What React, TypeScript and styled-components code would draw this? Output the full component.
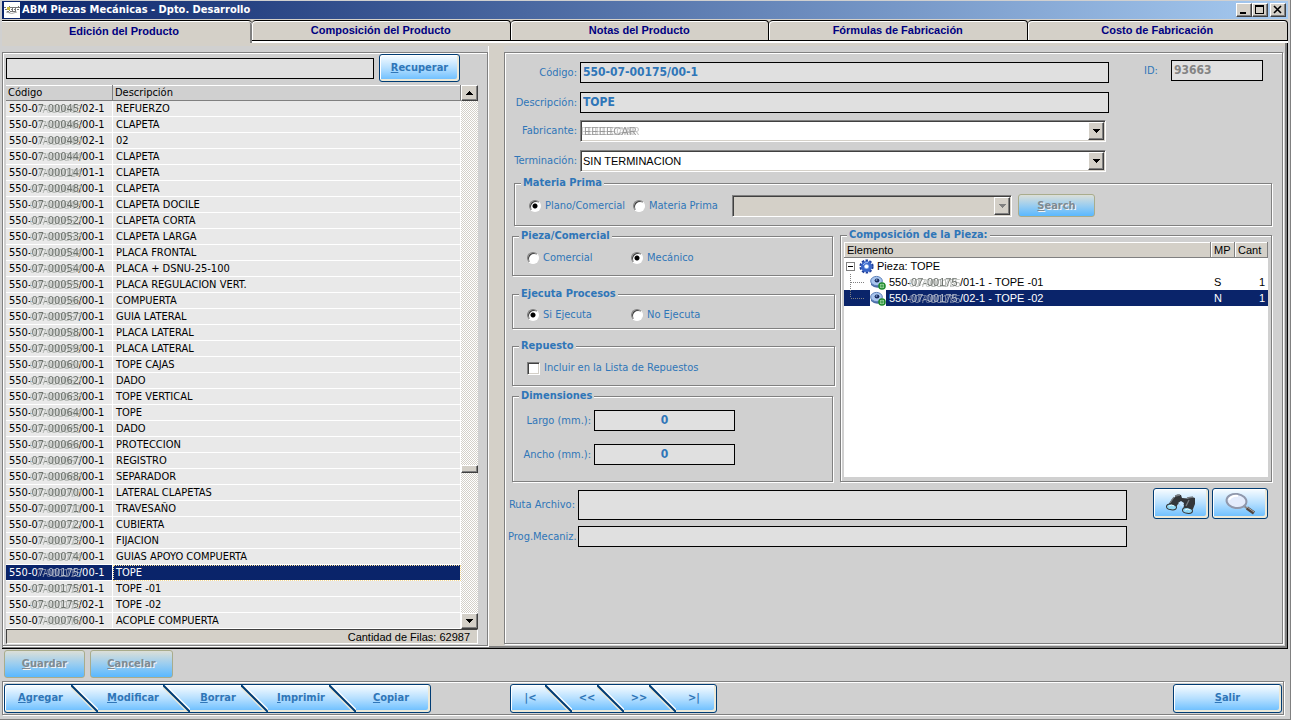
import React from "react";
import styled, { createGlobalStyle, css } from "styled-components";

const face = "#d4d0c8";
const panel = "#d0d0d0";
const blue = "#2f76b8";
const navy = "#0a246a";
const tahoma = '"DejaVu Sans Condensed", "DejaVu Sans", sans-serif';
const sans = '"Liberation Sans", Arial, sans-serif';

const Global = createGlobalStyle`
  *, *::before, *::after { box-sizing: border-box; }
  body { margin: 0; background: ${face}; }
  button, input, select { font: inherit; margin: 0; }
`;

const raised = css`
  background: ${face};
  border: 1px solid;
  border-color: #fff #404040 #404040 #fff;
  box-shadow: inset -1px -1px 0 #808080;
`;

const Window = styled.div`
  min-height: 100vh;
  display: flex;
  flex-direction: column;
  padding: 1px 2px 1px 2px;
  background: ${panel};
  border-right: 1px solid #808080;
  border-bottom: 1px solid #808080;
  font: 11px/14px ${tahoma};
  color: #000;
`;

const TitleBar = styled.header`
  display: flex;
  align-items: center;
  height: 18px;
  padding: 0 2px;
  gap: 2px;
  background: linear-gradient(90deg, ${navy}, #a6caf0);
  color: #fff;
`;
const Title = styled.h1`
  flex: 1;
  margin: 0;
  font: bold 11px/16px ${tahoma};
`;
const WindowButtons = styled.div`
  display: flex;
`;
const WindowButton = styled.button<{ $apart?: boolean }>`
  ${raised}
  width: 16px;
  height: 14px;
  padding: 0;
  margin-left: ${(p) => (p.$apart ? 2 : 0)}px;
  display: grid;
  place-items: center;
`;

const Tabs = styled.div`
  display: flex;
  height: 24px;
  background: ${face};
  border-top: 1px solid ${face};
`;
const Tab = styled.button<{ $active?: boolean }>`
  flex: ${(p) => (p.$active ? "0 0 250px" : "1 1 0")};
  height: ${(p) => (p.$active ? 23 : 21)}px;
  padding: ${(p) => (p.$active ? "0 6px 2px 0" : "0 0 2px")};
  background: ${face};
  border: 0 solid #000;
  border-width: ${(p) => (p.$active ? "1px 0 0 0" : "1px 1px 1px 0")};
  border-top-left-radius: ${(p) => (p.$active ? 0 : 4)}px;
  border-top-right-radius: 4px;
  box-shadow: ${(p) => (p.$active ? "inset 0 1px 0 #fff, inset -2px 0 0 #808080" : "inset 1px 1px 0 #fff, 0 2px 0 #fff")};
  color: #000080;
  font: bold 11px/14px ${sans};
  &:last-child { flex-basis: 3px; }
`;

const Page = styled.main`
  flex: 1;
  display: flex;
  padding: 9px 4px 2px 0;
  border-right: 1px solid #000;
  border-bottom: 1px solid #000;
  box-shadow: inset -2px -2px 0 #808080, inset 0 3px 0 ${face};
`;

const etched = css`
  border: 1px solid #808080;
  box-shadow: 1px 1px 0 #fff, inset 1px 1px 0 #fff;
`;
const ListPanel = styled.section`
  ${etched}
  flex: 0 0 486px;
  padding: 1px 9px 1px 3px;
  display: flex;
  flex-direction: column;
`;
const Splitter = styled.div`
  flex: 0 0 16px;
  margin-top: -6px;
  background: ${face};
  border-left: 1px solid #fff;
`;
const FormPanel = styled.section`
  ${etched}
  flex: 1;
  min-width: 0;
  margin-bottom: 2px;
  padding: 9px 10px 8px 7px;
`;

const SearchRow = styled.div`
  display: flex;
  align-items: center;
  gap: 5px;
  height: 28px;
  padding-right: 18px;
`;
const Field = styled.input<{ $tall?: boolean; $muted?: boolean; $center?: boolean }>`
  width: 100%;
  min-width: 0;
  height: ${(p) => (p.$tall ? 30 : 21)}px;
  padding: 0 2px 2px;
  border: 1px solid #000;
  border-radius: 0;
  background: #e0e0e0;
  color: ${(p) => (p.$muted ? "#848484" : blue)};
  text-align: ${(p) => (p.$center ? "center" : "left")};
  font: bold 12px/16px ${tahoma};
`;

const PushButton = styled.button<{ $w: number; $h?: number }>`
  flex: none;
  width: ${(p) => p.$w}px;
  height: ${(p) => p.$h ?? 28}px;
  padding: 0;
  display: grid;
  place-items: center;
  border: 1px solid #003c74;
  border-radius: 3px;
  background: linear-gradient(#f8fcff, #b5dfff 50%, #66bcff);
  box-shadow: inset -2px -2px 0 #ece9d8, inset 1px 1px 0 #fff;
  color: ${blue};
  font: bold 11px/14px ${tahoma};
  &:disabled {
    border-color: #a9ac8c;
    background: linear-gradient(#dcdfd8, #9acdf0 50%, #5ab8ff);
    box-shadow: none;
    color: #7f8a92;
    text-shadow: 1px 1px 0 #f4f4f4;
  }
`;

const ListBody = styled.div`
  display: flex;
  margin-top: 3px;
`;
const PartTable = styled.table`
  flex: 1;
  table-layout: fixed;
  border-collapse: separate;
  border-spacing: 0;
`;
const PartHead = styled.th`
  height: 16px;
  padding: 0 2px;
  border-right: 1px solid #808080;
  border-bottom: 1px solid #808080;
  box-shadow: inset 0 1px 0 #fff;
  text-align: left;
  font-weight: normal;
  line-height: 14px;
`;
const PartCell = styled.td<{ $focus?: boolean }>`
  height: 16px;
  padding: 0 2px 0 3px;
  border-bottom: 1px solid #fff;
  border-right: 1px solid #fff;
  line-height: 15px;
  white-space: nowrap;
  overflow: hidden;
  outline: ${(p) => (p.$focus ? "1px dotted #f5db95" : "none")};
  outline-offset: -1px;
`;
const PartRow = styled.tr<{ $selected?: boolean }>`
  background: ${(p) => (p.$selected ? navy : "#e9e9e9")};
  color: ${(p) => (p.$selected ? "#fff" : "#000")};
`;
const Smudge = styled.span<{ $w: number; $dark?: boolean }>`
  display: inline-block;
  width: ${(p) => p.$w}px;
  height: 15px;
  vertical-align: top;
  color: ${(p) => (p.$dark ? "#b4bccc" : "#6d726d")};
  text-shadow: 3px 1px 0 ${(p) => (p.$dark ? "#7d88a5" : "#b4b8b4")}, -2px 1px 0 ${(p) => (p.$dark ? "#66729a" : "#c4c8c4")};
  filter: blur(0.6px);
`;

const ScrollBar = styled.div`
  width: 17px;
  display: flex;
  flex-direction: column;
  background: repeating-conic-gradient(#fff 0 25%, ${face} 0 50%) 0 0 / 2px 2px;
`;
const ScrollButton = styled.button`
  ${raised}
  height: 16px;
  padding: 0;
  display: grid;
  place-items: center;
`;
const Track = styled.div<{ $grow: number }>`
  flex: ${(p) => p.$grow} 1 0;
`;
const Thumb = styled.div`
  ${raised}
  height: 8px;
`;
const Status = styled.div`
  height: 15px;
  padding-right: 7px;
  border: 1px solid;
  border-color: #404040 #fff #fff #404040;
  background: ${face};
  text-align: right;
  font: 11px/14px ${sans};
`;

const TopForm = styled.div`
  display: flex;
  align-items: flex-start;
`;
const Fields = styled.div`
  flex: 1;
  min-width: 0;
`;
const FieldGrid = styled.div<{ $combo?: boolean }>`
  display: grid;
  grid-template-columns: 68px 1fr;
  align-items: center;
  row-gap: ${(p) => (p.$combo ? 8 : 9)}px;
  margin-top: ${(p) => (p.$combo ? 7 : 0)}px;
  padding-right: ${(p) => (p.$combo ? 3 : 0)}px;
`;
const Label = styled.label<{ $start?: boolean }>`
  color: ${blue};
  text-align: ${(p) => (p.$start ? "left" : "right")};
  white-space: nowrap;
  padding-right: 3px;
`;
const IdBox = styled.div`
  flex: none;
  margin-top: -2px;
  padding: 0 9px 0 35px;
  display: grid;
  grid-template-columns: 27px 92px;
  align-items: center;
`;

const ComboBox = styled.div`
  position: relative;
  min-width: 0;
`;
const Select = styled.select`
  appearance: none;
  display: block;
  width: 100%;
  height: 22px;
  padding: 0 20px 0 2px;
  border: 1px solid;
  border-color: #808080 #fff #fff #808080;
  border-radius: 0;
  box-shadow: inset 1px 1px 0 #404040, inset -1px -1px 0 ${face};
  background: #fff;
  color: #000;
  font: 11px/16px ${sans};
  opacity: 1;
  &:disabled { background: ${face}; }
`;
const ComboArrow = styled.span`
  ${raised}
  position: absolute;
  top: 2px;
  right: 2px;
  bottom: 2px;
  width: 16px;
  display: grid;
  place-items: center;
  pointer-events: none;
`;
const MaskedValue = styled.span`
  position: absolute;
  left: 4px;
  top: 3px;
  color: #999;
  font: 11px/16px ${sans};
  text-shadow: -3px 0 0 #ccc, 3px 0 0 #c4c4c4;
  filter: blur(0.7px);
  pointer-events: none;
`;

const Group = styled.fieldset<{ $h: number; $inset?: number }>`
  min-width: 0;
  height: ${(p) => p.$h}px;
  margin: 0 ${(p) => p.$inset ?? 0}px 0 0;
  padding: 0 6px;
  ${etched}
`;
const Legend = styled.legend`
  padding: 0 2px;
  background: ${panel};
  color: ${blue};
  font: bold 11px/14px ${tahoma};
`;
const Line = styled.div<{ $top: number }>`
  display: flex;
  align-items: center;
  padding: ${(p) => p.$top}px 0 0 8px;
`;
const Option = styled.label<{ $w?: number }>`
  display: flex;
  align-items: center;
  gap: 4px;
  width: ${(p) => (p.$w ? p.$w + "px" : "auto")};
  color: ${blue};
  white-space: nowrap;
`;
const Radio = styled.input.attrs({ type: "radio" })`
  appearance: none;
  width: 12px;
  height: 12px;
  border: 1px solid;
  border-color: #808080 #fff #fff #808080;
  border-radius: 50%;
  background: #fff;
  box-shadow: inset 1px 1px 0 #404040;
  &:checked { background: radial-gradient(circle, #000 0 2px, #fff 3px); }
`;
const Check = styled.input.attrs({ type: "checkbox" })`
  appearance: none;
  width: 13px;
  height: 13px;
  border: 1px solid;
  border-color: #808080 #fff #fff #808080;
  background: #fff;
  box-shadow: inset 1px 1px 0 #404040, inset -1px -1px 0 ${face};
`;

const MaterialWrap = styled.div`
  margin: 4px 0 2px 2px;
`;
const ComboSlot = styled.div`
  flex: 1;
  min-width: 0;
  margin: 0 6px 0 14px;
`;
const EndSpace = styled.div`
  flex: 0 0 170px;
`;
const Middle = styled.div`
  display: grid;
  grid-template-columns: 323px 1fr;
  column-gap: 5px;
`;
const Groups = styled.div`
  display: flex;
  flex-direction: column;
  padding-top: 1px;
`;
const GroupGap = styled.div<{ $h: number }>`
  height: ${(p) => p.$h}px;
`;
const SizeGrid = styled.div`
  display: grid;
  grid-template-columns: 75px 141px;
  row-gap: 13px;
  align-items: center;
  padding-top: 7px;
`;

const TreeTable = styled.table`
  width: 100%;
  table-layout: fixed;
  border-spacing: 0;
  font: 11px/16px ${sans};
`;
const TreeBox = styled.div`
  height: 235px;
  margin: 0 -3px;
  background: #fff;
`;
const TreeHead = styled.th`
  height: 16px;
  padding: 0 3px;
  background: ${face};
  border-right: 1px solid #808080;
  border-bottom: 1px solid #808080;
  box-shadow: inset 1px 1px 0 #fff;
  text-align: left;
  font-weight: normal;
  line-height: 14px;
`;
const TreeRow = styled.tr<{ $selected?: boolean }>`
  background: ${(p) => (p.$selected ? navy : "#fff")};
  color: ${(p) => (p.$selected ? "#fff" : "#000")};
`;
const TreeCell = styled.td<{ $right?: boolean }>`
  height: 16px;
  padding: 0 3px;
  text-align: ${(p) => (p.$right ? "right" : "left")};
`;
const TreeItem = styled.div`
  display: flex;
  align-items: center;
  height: 16px;
  margin-left: -3px;
  white-space: nowrap;
  svg { flex: none; }
`;
const TreeText = styled.span`
  padding-left: 3px;
`;

const Files = styled.div`
  display: flex;
  align-items: flex-start;
  gap: 26px;
  margin: 6px 4px 0 -4px;
`;
const FileGrid = styled.div`
  flex: 1;
  display: grid;
  grid-template-columns: 70px 1fr;
  align-items: center;
  row-gap: 6px;
  padding-top: 2px;
`;
const FileButtons = styled.div`
  display: flex;
  gap: 3px;
`;

const EditBar = styled.div`
  display: flex;
  gap: 5px;
  height: 32px;
  padding: 1px 2px;
`;
const Footer = styled.footer`
  ${etched}
  display: flex;
  align-items: center;
  height: 34px;
  margin-right: 4px;
  margin-bottom: 3px;
  padding: 0 1px;
`;
const Strip = styled.div`
  display: flex;
  height: 29px;
  border: 1px solid #003c74;
  border-radius: 3px;
  background: linear-gradient(#f8fcff, #b5dfff 50%, #66bcff);
  box-shadow: inset -2px -2px 0 #ece9d8, inset 1px 1px 0 #fff;
`;
const StripButton = styled.button<{ $w: number }>`
  width: ${(p) => p.$w}px;
  padding: 0 0 0 5px;
  border: 0;
  background: none;
  color: ${blue};
  font: bold 11px/14px ${tahoma};
  white-space: nowrap;
  &:last-child { padding: 0 4px 0 0; }
`;
const StripGap = styled.div<{ $w?: number }>`
  flex: ${(p) => (p.$w ? `0 0 ${p.$w}px` : "1")};
`;

const Arrow = ({ up, color = "#000" }: { up?: boolean; color?: string }) => (
  <svg width="7" height="4" viewBox="0 0 7 4" shapeRendering="crispEdges" aria-hidden="true">
    <path d={up ? "M3 0h1v1h1v1h1v1h1v1H0V3h1V2h1V1h1z" : "M0 0h7v1H6v1H5v1H4v1H3V3H2V2H1V1H0z"} fill={color} />
  </svg>
);

const Slash = () => (
  <svg width="27" height="27" viewBox="0 0 27 27" aria-hidden="true">
    <path d="M2 0L29 27" stroke="#fff" strokeWidth="2" />
    <path d="M-2 0L25 27" stroke="#ece9d8" strokeWidth="2" />
    <path d="M0 0L27 27" stroke="#003c74" strokeWidth="2" />
  </svg>
);

const AppIcon = () => (
  <svg width="16" height="16" viewBox="0 0 16 16" aria-hidden="true">
    <rect width="16" height="16" fill="#fff" />
    <path d="M0 5.5h16M1 7.500h14M3 9.500h9M5.500 4v7M8.500 5v6M11.500 5v5M14.500 4v4" stroke="#777" strokeWidth="1" strokeDasharray="2 1" fill="none" />
    <rect x="3" y="5" width="3" height="3" fill="#c9b93c" />
    <path d="M2 10q6 3 11 0" stroke="#aaa" fill="none" />
  </svg>
);

const Gear = () => (
  <svg width="15" height="15" viewBox="0 0 15 15" aria-hidden="true">
    <circle cx="7.5" cy="7.5" r="6" fill="none" stroke="#1f3f9a" strokeWidth="2.2" strokeDasharray="2.4 1.4" />
    <circle cx="7.5" cy="7.5" r="4" fill="#8fb6ee" stroke="#3a66c8" strokeWidth="3" />
    <path d="M4 6q1.500-3 5-2.500" stroke="#9dbcf2" fill="none" />
    <circle cx="7.5" cy="7.5" r="1.8" fill="#fff" />
  </svg>
);

const PartIcon = () => (
  <svg width="16" height="16" viewBox="0 0 16 16" aria-hidden="true">
    <rect width="16" height="16" fill="#fff" />
    <path d="M1 8v3q4 4 10 2V9z" fill="#4c6ea8" />
    <ellipse cx="6.5" cy="7" rx="5.8" ry="4.6" fill="#a9c6ee" stroke="#5b7fb8" />
    <ellipse cx="7" cy="6.5" rx="2.4" ry="2" fill="#182c5c" />
    <ellipse cx="6.5" cy="6" rx="1" ry=".8" fill="#7fa3dc" />
    <circle cx="12" cy="12" r="3" fill="#d9f5d4" stroke="#1d8a2c" strokeWidth="1.6" />
    <path d="M12 10v4M10 12h4" stroke="#1d8a2c" />
  </svg>
);

const Toggle = () => (
  <svg width="15" height="16" viewBox="0 0 15 16" shapeRendering="crispEdges" aria-hidden="true">
    <rect x="2.500" y="4.500" width="8" height="8" fill="#fff" stroke="#808080" />
    <path d="M4 8.500h5" stroke="#000" />
  </svg>
);

const Branch = ({ last }: { last?: boolean }) => (
  <svg width="26" height="16" viewBox="0 0 26 16" shapeRendering="crispEdges" aria-hidden="true">
    <path d={`M6.500 0V${last ? 8 : 16}M7 8.500h13`} stroke="#808080" strokeDasharray="1 1" fill="none" />
  </svg>
);

const Binoculars = () => (
  <svg width="32" height="22" viewBox="0 0 32 22" aria-hidden="true">
    <path d="M10 4q0-2 3-2.500l3 .5 1 3 6 .5q1-2 4-1.500l3 1v6l-2 5-3 3-7-1 1-6-6-1-3 5-8-2 5-8z" fill="#33363a" />
    <path d="M10 3l5-1M22 5l6-1M5 10l4-6M21 13l3-6" stroke="#777c82" strokeWidth="1.300" fill="none" />
    <path d="M13 10l3-2 3 2-1 4-3-2z" fill="#c6e6ff" />
    <ellipse cx="6.500" cy="14" rx="5" ry="2.800" fill="#8fd6f2" stroke="#333" strokeWidth="1" transform="rotate(8 6.500 14)" />
    <ellipse cx="22.500" cy="17.500" rx="5" ry="2.800" fill="#8fd6f2" stroke="#333" strokeWidth="1" transform="rotate(8 22.500 17.500)" />
    <path d="M4 13q3-2 5 0M20 17q3-2 5 0" stroke="#e8fbff" fill="none" />
  </svg>
);

const Magnifier = () => (
  <svg width="32" height="24" viewBox="0 0 32 24" aria-hidden="true">
    <path d="M20 14l4 3" stroke="#888" strokeWidth="2" />
    <path d="M23 16l7 5" stroke="#50453f" strokeWidth="3.400" />
    <path d="M23 15l7 5" stroke="#b0aaa6" strokeWidth="1" />
    <ellipse cx="12.500" cy="9" rx="10" ry="7" fill="#e4ecfc" stroke="#9098ac" strokeWidth="2" transform="rotate(8 12.500 9)" />
    <path d="M5 8q3-5 9-4" stroke="#fff" strokeWidth="2" fill="none" />
  </svg>
);

type Part = [start: string, hidden: string, end: string, description: string];
const parts: Part[] = [
  ["550-0", "7-00045", "/02-1", "REFUERZO"],
  ["550-0", "7-00046", "/00-1", "CLAPETA"],
  ["550-0", "7-00049", "/02-1", "02"],
  ["550-0", "7-00044", "/00-1", "CLAPETA"],
  ["550-0", "7-00014", "/01-1", "CLAPETA"],
  ["550-", "07-00048", "/00-1", "CLAPETA"],
  ["550-", "07-00049", "/00-1", "CLAPETA DOCILE"],
  ["550-", "07-00052", "/00-1", "CLAPETA CORTA"],
  ["550-", "07-00053", "/00-1", "CLAPETA LARGA"],
  ["550-", "07-00054", "/00-1", "PLACA FRONTAL"],
  ["550-", "07-00054", "/00-A", "PLACA + DSNU-25-100"],
  ["550-", "07-00055", "/00-1", "PLACA REGULACION VERT."],
  ["550-", "07-00056", "/00-1", "COMPUERTA"],
  ["550-", "07-00057", "/00-1", "GUIA LATERAL"],
  ["550-", "07-00058", "/00-1", "PLACA LATERAL"],
  ["550-", "07-00059", "/00-1", "PLACA LATERAL"],
  ["550-", "07-00060", "/00-1", "TOPE CAJAS"],
  ["550-", "07-00062", "/00-1", "DADO"],
  ["550-", "07-00063", "/00-1", "TOPE VERTICAL"],
  ["550-", "07-00064", "/00-1", "TOPE"],
  ["550-", "07-00065", "/00-1", "DADO"],
  ["550-", "07-00066", "/00-1", "PROTECCION"],
  ["550-", "07-00067", "/00-1", "REGISTRO"],
  ["550-", "07-00068", "/00-1", "SEPARADOR"],
  ["550-", "07-00070", "/00-1", "LATERAL CLAPETAS"],
  ["550-0", "7-00071", "/00-1", "TRAVESAÑO"],
  ["550-0", "7-00072", "/00-1", "CUBIERTA"],
  ["550-0", "7-00073", "/00-1", "FIJACION"],
  ["550-0", "7-00074", "/00-1", "GUIAS APOYO COMPUERTA"],
  ["550-0", "7-00175", "/00-1", "TOPE"],
  ["550-", "07-00175", "/01-1", "TOPE -01"],
  ["550-", "07-00175", "/02-1", "TOPE -02"],
  ["550-0", "7-00076", "/00-1", "ACOPLE COMPUERTA"],
];

const tabs = [
  "Edición del Producto",
  "Composición del Producto",
  "Notas del Producto",
  "Fórmulas de Fabricación",
  "Costo de Fabricación",
];

const Hot = ({ text }: { text: string }) => (
  <span>
    <u>{text[0]}</u>
    {text.slice(1)}
  </span>
);

export default function App() {
  return (
    <Window>
      <Global />
      <TitleBar>
        <AppIcon />
        <Title>ABM Piezas Mecánicas - Dpto. Desarrollo</Title>
        <WindowButtons>
          <WindowButton aria-label="Minimizar">
            <svg width="10" height="10" shapeRendering="crispEdges"><path d="M1 7h6v2H1z" /></svg>
          </WindowButton>
          <WindowButton aria-label="Maximizar">
            <svg width="10" height="10" shapeRendering="crispEdges"><path d="M0 0h9v9H0zM1 2v6h7V2z" fillRule="evenodd" /></svg>
          </WindowButton>
          <WindowButton $apart aria-label="Cerrar">
            <svg width="10" height="10"><path d="M1 1l7 7M8 1L1 8" stroke="#000" strokeWidth="1.600" /></svg>
          </WindowButton>
        </WindowButtons>
      </TitleBar>

      <Tabs role="tablist">
        {tabs.map((t, i) => (
          <Tab key={t} role="tab" aria-selected={i === 0} $active={i === 0}>{t}</Tab>
        ))}
      </Tabs>

      <Page>
        <ListPanel>
          <SearchRow>
            <Field aria-label="Buscar pieza" />
            <PushButton $w={81}><Hot text="Recuperar" /></PushButton>
          </SearchRow>
          <ListBody>
            <PartTable>
              <colgroup><col width="107" /><col /></colgroup>
              <thead>
                <tr><PartHead>Código</PartHead><PartHead>Descripción</PartHead></tr>
              </thead>
              <tbody>
                {parts.map(([start, hidden, end, description], i) => {
                  const selected = i === 29;
                  return (
                    <PartRow key={i} $selected={selected}>
                      <PartCell>
                        {start}
                        <Smudge $w={start.length > 4 ? 41 : 47} $dark={selected}>{hidden}</Smudge>
                        {end}
                      </PartCell>
                      <PartCell $focus={selected}>{description}</PartCell>
                    </PartRow>
                  );
                })}
              </tbody>
            </PartTable>
            <ScrollBar>
              <ScrollButton aria-label="Subir"><Arrow up /></ScrollButton>
              <Track $grow={364} />
              <Thumb />
              <Track $grow={140} />
              <ScrollButton aria-label="Bajar"><Arrow /></ScrollButton>
            </ScrollBar>
          </ListBody>
          <Status>Cantidad de Filas: 62987</Status>
        </ListPanel>
        <Splitter />
        <FormPanel>
          <TopForm>
            <Fields>
              <FieldGrid>
                <Label htmlFor="codigo">Código:</Label>
                <Field id="codigo" defaultValue="550-07-00175/00-1" />
                <Label htmlFor="descripcion">Descripción:</Label>
                <Field id="descripcion" defaultValue="TOPE" />
              </FieldGrid>
              <FieldGrid $combo>
                <Label htmlFor="fabricante">Fabricante:</Label>
                <ComboBox>
                  <Select id="fabricante"><option></option></Select>
                  <MaskedValue>EEEECAR</MaskedValue>
                  <ComboArrow><Arrow /></ComboArrow>
                </ComboBox>
                <Label htmlFor="terminacion">Terminación:</Label>
                <ComboBox>
                  <Select id="terminacion"><option>SIN TERMINACION</option></Select>
                  <ComboArrow><Arrow /></ComboArrow>
                </ComboBox>
              </FieldGrid>
            </Fields>
            <IdBox>
              <Label $start htmlFor="id">ID:</Label>
              <Field id="id" $muted defaultValue="93663" />
            </IdBox>
          </TopForm>

          <MaterialWrap>
            <Group $h={50}>
              <Legend>Materia Prima</Legend>
              <Line $top={4}>
                <Option $w={104}><Radio name="materia" defaultChecked />Plano/Comercial</Option>
                <Option><Radio name="materia" />Materia Prima</Option>
                <ComboSlot>
                  <ComboBox>
                    <Select disabled aria-label="Materia prima" />
                    <ComboArrow><Arrow color="#808080" /></ComboArrow>
                  </ComboBox>
                </ComboSlot>
                <PushButton $w={77} $h={23} disabled><Hot text="Search" /></PushButton>
                <EndSpace />
              </Line>
            </Group>
          </MaterialWrap>

          <Middle>
            <Groups>
              <Group $h={47} $inset={2}>
                <Legend>Pieza/Comercial</Legend>
                <Line $top={8}>
                  <Option $w={104}><Radio name="tipo" />Comercial</Option>
                  <Option><Radio name="tipo" defaultChecked />Mecánico</Option>
                </Line>
              </Group>
              <GroupGap $h={11} />
              <Group $h={42}>
                <Legend>Ejecuta Procesos</Legend>
                <Line $top={7}>
                  <Option $w={104}><Radio name="ejecuta" defaultChecked />Si Ejecuta</Option>
                  <Option><Radio name="ejecuta" />No Ejecuta</Option>
                </Line>
              </Group>
              <GroupGap $h={10} />
              <Group $h={47}>
                <Legend>Repuesto</Legend>
                <Line $top={8}>
                  <Option><Check />Incluir en la Lista de Repuestos</Option>
                </Line>
              </Group>
              <GroupGap $h={3} />
              <Group $h={93} $inset={2}>
                <Legend>Dimensiones</Legend>
                <SizeGrid>
                  <Label htmlFor="largo">Largo (mm.):</Label>
                  <Field id="largo" $center defaultValue="0" />
                  <Label htmlFor="ancho">Ancho (mm.):</Label>
                  <Field id="ancho" $center defaultValue="0" />
                </SizeGrid>
              </Group>
            </Groups>
            <Group $h={254}>
              <Legend>Composición de la Pieza:</Legend>
              <TreeBox>
                <TreeTable>
                  <colgroup><col /><col width="24" /><col width="33" /></colgroup>
                  <thead>
                    <tr><TreeHead>Elemento</TreeHead><TreeHead>MP</TreeHead><TreeHead>Cant</TreeHead></tr>
                  </thead>
                  <tbody>
                    <TreeRow>
                      <TreeCell colSpan={3}>
                        <TreeItem><Toggle /><Gear /><TreeText>Pieza: TOPE</TreeText></TreeItem>
                      </TreeCell>
                    </TreeRow>
                    <TreeRow>
                      <TreeCell>
                        <TreeItem><Branch /><PartIcon /><TreeText>550-<Smudge $w={49}>07-00175</Smudge>/01-1 - TOPE -01</TreeText></TreeItem>
                      </TreeCell>
                      <TreeCell>S</TreeCell>
                      <TreeCell $right>1</TreeCell>
                    </TreeRow>
                    <TreeRow $selected>
                      <TreeCell>
                        <TreeItem><Branch last /><PartIcon /><TreeText>550-<Smudge $w={49} $dark>07-00175</Smudge>/02-1 - TOPE -02</TreeText></TreeItem>
                      </TreeCell>
                      <TreeCell>N</TreeCell>
                      <TreeCell $right>1</TreeCell>
                    </TreeRow>
                  </tbody>
                </TreeTable>
              </TreeBox>
            </Group>
          </Middle>

          <Files>
            <FileGrid>
              <Label htmlFor="ruta">Ruta Archivo:</Label>
              <Field id="ruta" $tall />
              <Label htmlFor="prog">Prog.Mecaniz.</Label>
              <Field id="prog" />
            </FileGrid>
            <FileButtons>
              <PushButton $w={56} $h={31} aria-label="Buscar archivo"><Binoculars /></PushButton>
              <PushButton $w={56} $h={31} aria-label="Ver archivo"><Magnifier /></PushButton>
            </FileButtons>
          </Files>
        </FormPanel>
      </Page>

      <EditBar>
        <PushButton $w={81} disabled><Hot text="Guardar" /></PushButton>
        <PushButton $w={83} disabled><Hot text="Cancelar" /></PushButton>
      </EditBar>
      <Footer>
        <Strip>
          <StripButton $w={66}><Hot text="Agregar" /></StripButton>
          <Slash />
          <StripButton $w={65}><Hot text="Modificar" /></StripButton>
          <Slash />
          <StripButton $w={51}><Hot text="Borrar" /></StripButton>
          <Slash />
          <StripButton $w={61}><Hot text="Imprimir" /></StripButton>
          <Slash />
          <StripButton $w={74}><Hot text="Copiar" /></StripButton>
        </Strip>
        <StripGap $w={79} />
        <Strip>
          <StripButton $w={34}>|&lt;</StripButton>
          <Slash />
          <StripButton $w={25}>&lt;&lt;</StripButton>
          <Slash />
          <StripButton $w={25}>&gt;&gt;</StripButton>
          <Slash />
          <StripButton $w={40}>&gt;|</StripButton>
        </Strip>
        <StripGap />
        <PushButton $w={109} $h={29}><Hot text="Salir" /></PushButton>
      </Footer>
    </Window>
  );
}
